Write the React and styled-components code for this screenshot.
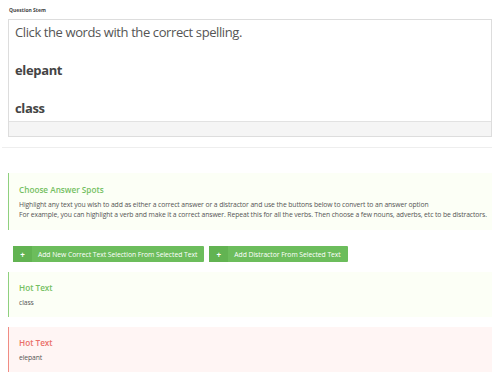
import styled, { createGlobalStyle } from 'styled-components';

const GlobalStyle = createGlobalStyle`
  body {
    margin: 0;
    background: #ffffff;
    font-family: "Open Sans", "Liberation Sans", sans-serif;
    color: #555555;
  }
`;

const Page = styled.div`
  width: 500px;
  height: 384px;
  overflow: hidden;
  padding: 7px 8px 0 8px;
  box-sizing: border-box;
`;

const Label = styled.div`
  font-size: 5px;
  font-weight: 700;
  color: #444;
  line-height: 7px;
  margin-left: 1px;
`;

const Editor = styled.div`
  margin-top: 5px;
  border: 1px solid #dddddd;
`;

const EditorBody = styled.div`
  height: 101px;
  padding: 2px 6px 0 6px;
  box-sizing: border-box;
  background: #fff;
`;

const StemLine = styled.p`
  margin: 0 0 18px 0;
  font-size: 13px;
  line-height: 20px;
  font-weight: ${(p) => (p.$bold ? 700 : 400)};
  color: ${(p) => (p.$bold ? '#444' : '#555')};
  letter-spacing: ${(p) => (p.$bold ? '-0.35px' : '-0.4px')};
`;

const EditorFooter = styled.div`
  height: 14px;
  background: #f5f5f5;
  border-top: 1px solid #e2e2e2;
`;

const Divider = styled.div`
  margin: 10px 0 0 -6px;
  border-top: 1px solid #eeeeee;
`;

const Panel = styled.div`
  border-left: 1px solid ${(p) => (p.$tone === 'red' ? '#f08c84' : '#8fd07f')};
  background: ${(p) => (p.$tone === 'red' ? '#fff5f4' : '#fcfff6')};
  padding: ${(p) => p.$pad || '11px 10px 9px 10px'};
  margin-top: ${(p) => p.$top || '0'};
`;

const PanelTitle = styled.div`
  font-size: 8.2px;
  line-height: 12px;
  font-weight: 600;
  color: ${(p) => (p.$tone === 'red' ? '#ea6f69' : '#74c062')};
  margin-bottom: ${(p) => p.$gap || '3px'};
`;

const PanelText = styled.div`
  font-size: 6.8px;
  line-height: 10px;
  color: #555;
  letter-spacing: -0.1px;
  white-space: nowrap;
`;

const Buttons = styled.div`
  display: flex;
  gap: 5px;
  margin: 16px 0 0 5px;
`;

const Button = styled.button`
  display: flex;
  align-items: stretch;
  height: 16px;
  padding: 0;
  border: none;
  border-radius: 1px;
  background: #6cbd5c;
  color: #fff;
  font-family: "Open Sans", "Liberation Sans", sans-serif;
  font-size: 6.8px;
  letter-spacing: -0.05px;
  cursor: pointer;
`;

const Plus = styled.span`
  width: 19px;
  display: flex;
  align-items: center;
  justify-content: center;
  background: #62b352;
  font-size: 8px;
  font-weight: 700;
`;

const ButtonLabel = styled.span`
  display: flex;
  align-items: center;
  padding: 0 7px 0 6px;
`;

export default function App() {
  return (
    <>
      <GlobalStyle />
      <Page>
        <Label>Question Stem</Label>
        <Editor>
          <EditorBody>
            <StemLine>Click the words with the correct spelling.</StemLine>
            <StemLine $bold>elepant</StemLine>
            <StemLine $bold>class</StemLine>
          </EditorBody>
          <EditorFooter />
        </Editor>
        <Divider />

        <Panel $top="25px" $pad="11px 10px 10px 10px">
          <PanelTitle $gap="4px">Choose Answer Spots</PanelTitle>
          <PanelText>
            Highlight any text you wish to add as either a correct answer or a distractor and use the buttons below to convert to an answer option
          </PanelText>
          <PanelText>
            For example, you can highlight a verb and make it a correct answer. Repeat this for all the verbs. Then choose a few nouns, adverbs, etc to be distractors.
          </PanelText>
        </Panel>

        <Buttons>
          <Button>
            <Plus>+</Plus>
            <ButtonLabel>Add New Correct Text Selection From Selected Text</ButtonLabel>
          </Button>
          <Button>
            <Plus>+</Plus>
            <ButtonLabel>Add Distractor From Selected Text</ButtonLabel>
          </Button>
        </Buttons>

        <Panel $top="10px" $pad="10px 10px 9px 10px">
          <PanelTitle $gap="4px">Hot Text</PanelTitle>
          <PanelText>class</PanelText>
        </Panel>
        <Panel $tone="red" $top="10px" $pad="10px 10px 9px 10px">
          <PanelTitle $tone="red" $gap="4px">Hot Text</PanelTitle>
          <PanelText>elepant</PanelText>
        </Panel>
      </Page>
    </>
  );
}
